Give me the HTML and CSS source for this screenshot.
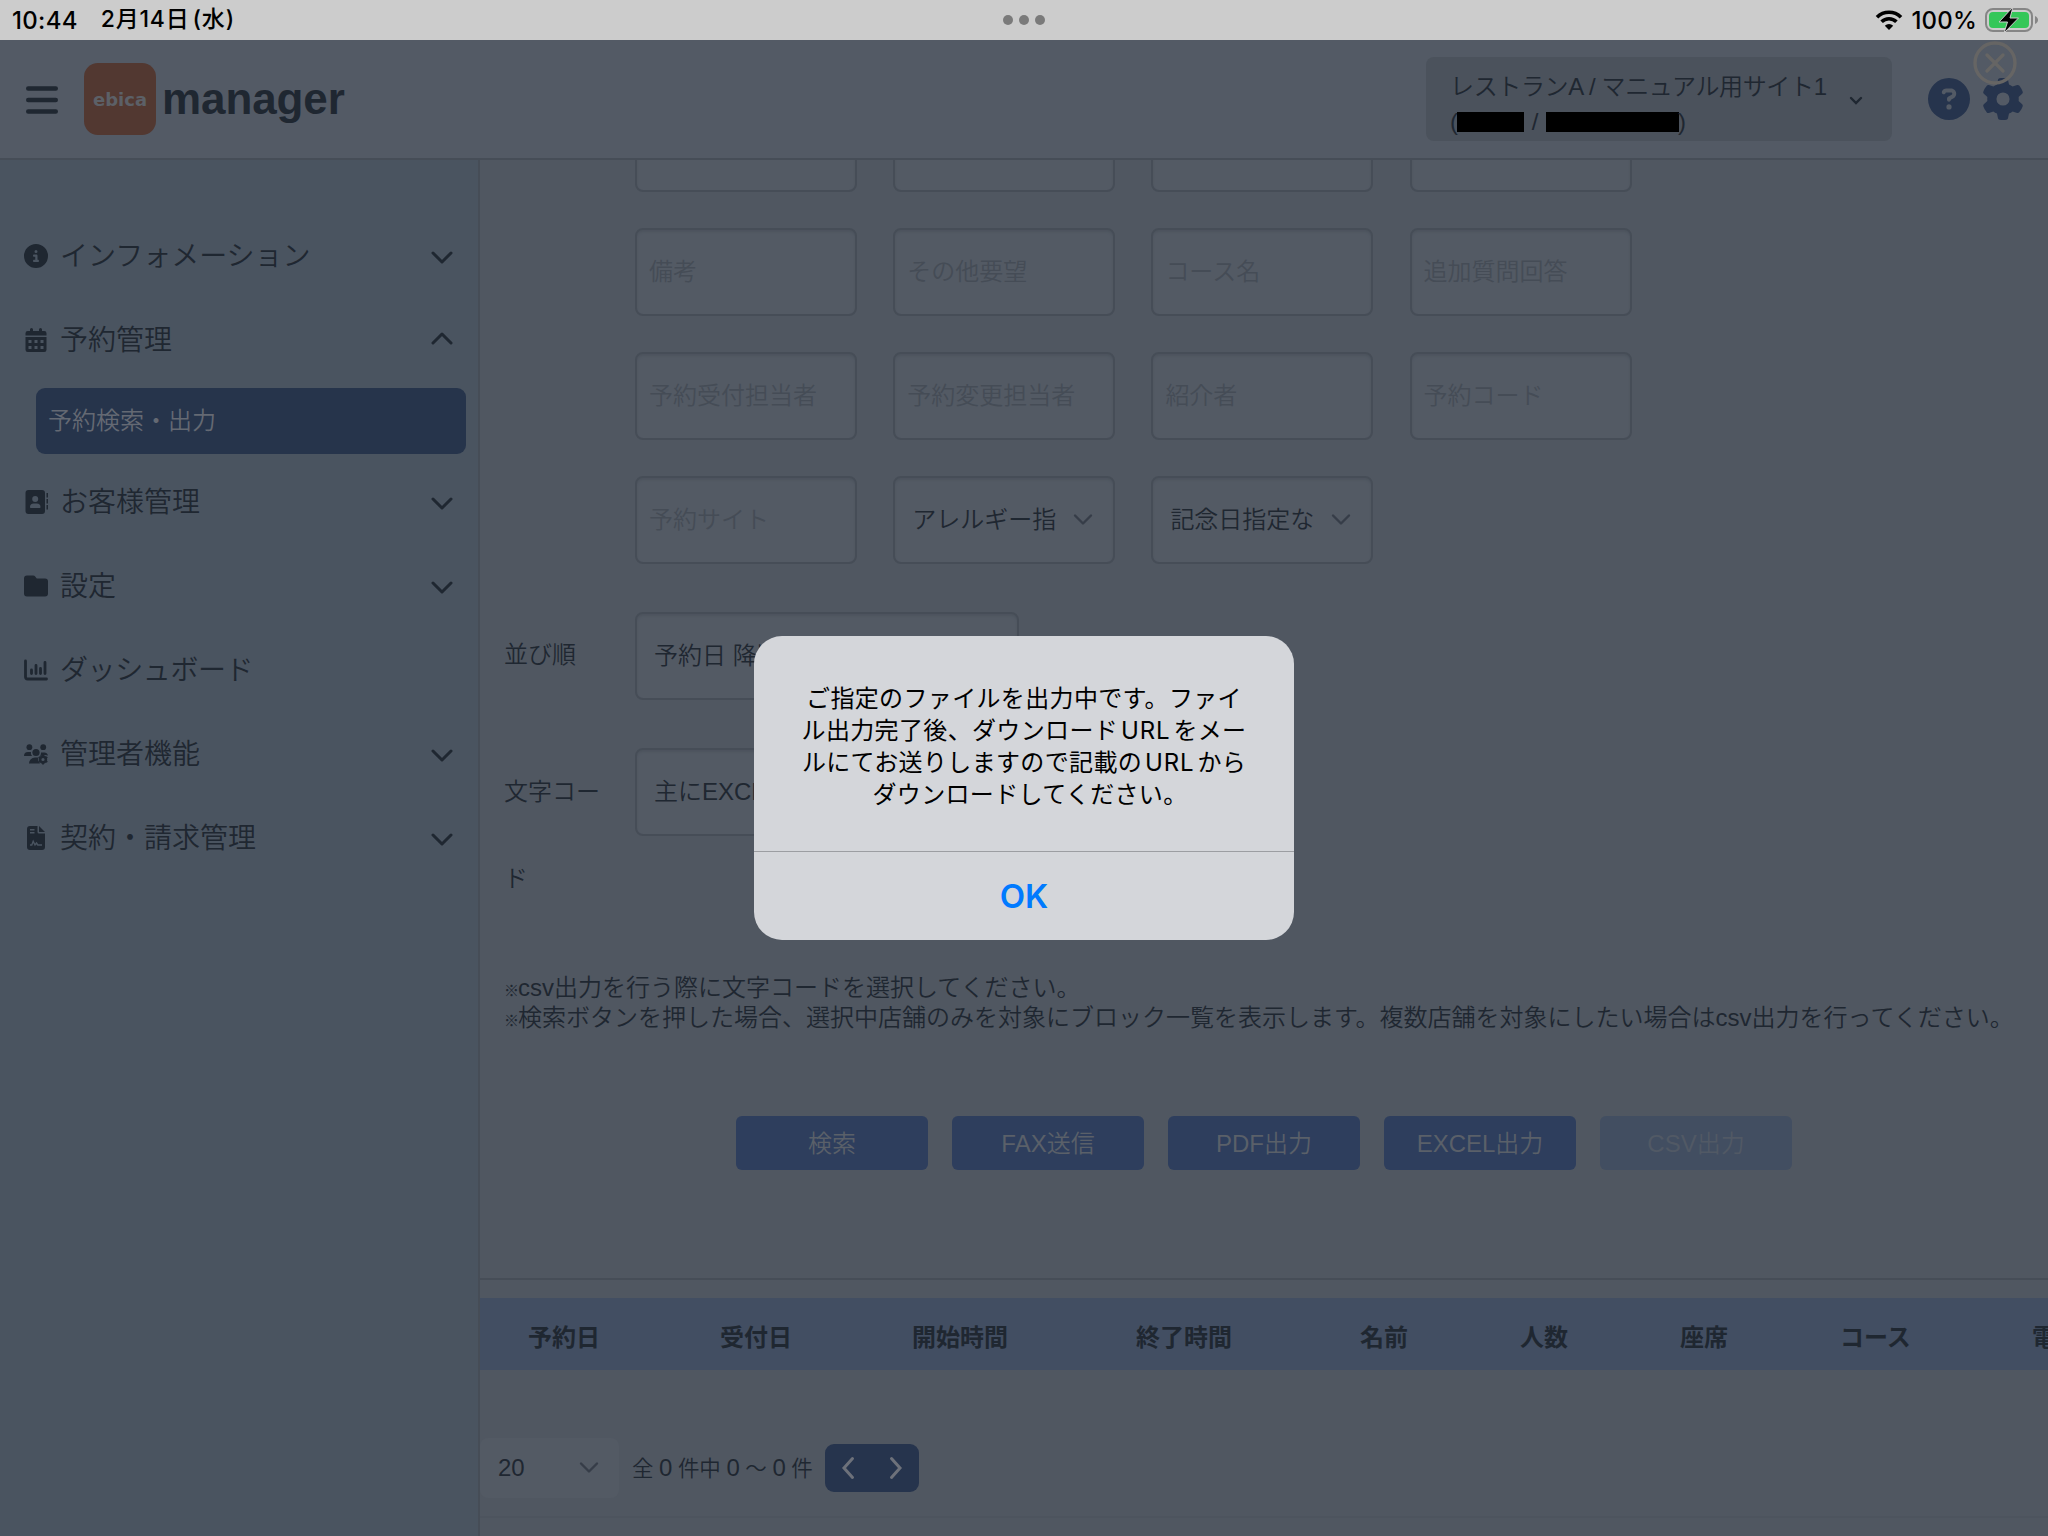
FILE: index.html
```
<!DOCTYPE html>
<html lang="ja">
  <head>
    <meta charset="UTF-8" />
    <title>ebica manager</title>
    <link rel="stylesheet" href="styles.css">
  </head>
  <body>
    <div class="statusbar">
      <div class="status-left"><span class="time">10:44</span><span class="date">2月14日<span class="paren">(</span>水<span>)</span></span></div>
      <div class="dots"><i></i><i></i><i></i></div>
      <div class="status-right">
        <svg class="wifi" viewBox="0 0 28 22">
          <path d="M2 8.2a17 17 0 0 1 24 0M6.6 12.8a10.5 10.5 0 0 1 14.8 0" fill="none" stroke="#000" stroke-width="3.6" />
          <path d="M14 21l-4.2-4.3a6 6 0 0 1 8.4 0z" />
        </svg>
        <span class="percent">100%</span>
        <svg class="battery" viewBox="0 0 54 26">
          <rect x="1" y="2" width="46" height="22" rx="7" fill="none" stroke="#858585" stroke-width="2" />
          <rect x="4" y="5" width="40" height="16" rx="4" fill="#35c759" />
          <path d="M50 9v8c2-.8 3-2.300 3-4s-1-3.200-3-4z" fill="#858585" />
          <path d="M28 0L14 15h8.500L19 26 33.500 11H25z" fill="#000" stroke="#ccc" stroke-width="1" />
        </svg>
      </div>
    </div>

    <header class="header">
      <svg class="burger" viewBox="0 0 32 28"><path d="M2.200 2.500h27.600M2.200 14h27.600M2.200 25.500h27.600" /></svg>
      <div class="logo">ebica</div>
      <h1>manager</h1>
      <div class="shop">
        <div class="shop-name">
          <div>レストランA / マニュアル用サイト1</div>
          <div class="shop-id">(<span class="mask mask-s"></span><span>/</span><span class="mask mask-l"></span>)</div>
        </div>
        <svg class="shop-arrow" viewBox="0 0 14 9"><path d="M2 2l5 5 5-5" /></svg>
      </div>
      <svg class="round" viewBox="0 0 512 512"><path d="M256 512A256 256 0 1 0 256 0a256 256 0 1 0 0 512zM169.800 165.300c7.900-22.300 29.100-37.300 52.800-37.300h58.300c34.900 0 63.100 28.300 63.100 63.100c0 22.600-12.100 43.500-31.700 54.800L280 264.400c-.2 13-10.900 23.600-24 23.600c-13.300 0-24-10.700-24-24V250.500c0-8.600 4.600-16.500 12.100-20.800l44.300-25.400c4.700-2.700 7.600-7.700 7.600-13.100c0-8.400-6.800-15.100-15.100-15.100H222.600c-3.400 0-6.400 2.100-7.500 5.300l-.4 1.200c-4.400 12.500-18.200 19-30.600 14.600s-19-18.200-14.600-30.600l.4-1.200zM224 352a32 32 0 1 1 64 0 32 32 0 1 1 -64 0z" /></svg>
      <svg class="round gear" viewBox="0 0 512 512"><path d="M495.900 166.600c3.200 8.700 .5 18.400-6.400 24.600l-43.300 39.400c1.100 8.300 1.700 16.800 1.700 25.400s-.6 17.100-1.700 25.400l43.300 39.400c6.900 6.200 9.600 15.900 6.400 24.600c-4.400 11.900-9.700 23.300-15.800 34.300l-4.700 8.100c-6.600 11-14 21.400-22.100 31.200c-5.900 7.200-15.700 9.600-24.500 6.800l-55.700-17.700c-13.400 10.300-28.200 18.900-44 25.400l-12.500 57.100c-2 9.100-9 16.300-18.200 17.800c-13.800 2.300-28 3.500-42.500 3.500s-28.700-1.200-42.500-3.500c-9.200-1.500-16.200-8.700-18.200-17.800l-12.500-57.100c-15.800-6.500-30.600-15.100-44-25.400L83.100 425.900c-8.800 2.800-18.600 .3-24.500-6.800c-8.100-9.800-15.500-20.200-22.100-31.200l-4.700-8.100c-6.100-11-11.400-22.400-15.800-34.300c-3.200-8.700-.5-18.400 6.400-24.600l43.300-39.400C64.600 273.100 64 264.600 64 256s.6-17.100 1.700-25.400L22.400 191.200c-6.900-6.200-9.600-15.900-6.400-24.600c4.400-11.900 9.700-23.300 15.800-34.300l4.700-8.100c6.600-11 14-21.400 22.100-31.200c5.900-7.200 15.700-9.600 24.500-6.800l55.700 17.700c13.400-10.300 28.200-18.900 44-25.400l12.500-57.100c2-9.100 9-16.300 18.200-17.800C227.300 1.200 241.500 0 256 0s28.700 1.200 42.500 3.500c9.200 1.500 16.200 8.700 18.200 17.800l12.500 57.100c15.800 6.500 30.600 15.100 44 25.400l55.700-17.700c8.800-2.800 18.600-.3 24.500 6.800c8.100 9.800 15.500 20.200 22.100 31.200l4.700 8.100c6.100 11 11.400 22.400 15.800 34.300zM256 336a80 80 0 1 0 0-160 80 80 0 1 0 0 160z" /></svg>
      <svg class="close" viewBox="0 0 44 44"><circle cx="22" cy="22" r="20" /><path d="M14 14l16 16M30 14L14 30" /></svg>
    </header>

    <div class="page">
      <nav class="sidebar">
        <div class="item">
          <svg class="icon" viewBox="0 0 512 512"><path d="M256 512A256 256 0 1 0 256 0a256 256 0 1 0 0 512zM216 336h24V272H216c-13.300 0-24-10.700-24-24s10.700-24 24-24h48c13.300 0 24 10.700 24 24v88h8c13.300 0 24 10.700 24 24s-10.700 24-24 24H216c-13.300 0-24-10.700-24-24s10.700-24 24-24zm40-208a32 32 0 1 1 0 64 32 32 0 1 1 0-64z" /></svg>
          <span>インフォメーション</span>
          <svg class="chev" viewBox="0 0 22 14"><path d="M2 2l9 9 9-9" /></svg>
        </div>
        <div class="item">
          <svg class="icon" viewBox="0 0 24 24"><path fill-rule="evenodd" d="M6 1.500a1.500 1.500 0 0 1 3 0V3h6V1.500a1.500 1.500 0 0 1 3 0V3h2.200a2.300 2.300 0 0 1 2.300 2.300V7.500h-21V5.300A2.300 2.300 0 0 1 3.800 3H6zM1.500 9h21v12.700a2.300 2.300 0 0 1-2.300 2.300H3.800a2.300 2.300 0 0 1-2.300-2.300zM4.500 12v3h3v-3zM10.500 12v3h3v-3zM16.500 12v3h3v-3zM4.500 18v3h3v-3zM10.500 18v3h3v-3zM16.500 18v3h3v-3z" /></svg>
          <span>予約管理</span>
          <svg class="chev up" viewBox="0 0 22 14"><path d="M2 12l9-9 9 9" /></svg>
        </div>
        <div class="sub">予約検索・出力</div>
        <div class="item">
          <svg class="icon" viewBox="0 0 24 24"><path fill-rule="evenodd" d="M4.500 0H18a3 3 0 0 1 3 3v18a3 3 0 0 1-3 3H4.500a3 3 0 0 1-3-3V3a3 3 0 0 1 3-3zM11.200 12a3 3 0 1 0 0-6 3 3 0 0 0 0 6zM9.700 13.500A3.700 3.700 0 0 0 6 17.300c0 .4.300.7.800.7h9c.4 0 .7-.3.7-.7a3.700 3.700 0 0 0-3.700-3.800zM22.500 3H24v4.500h-1.500zM22.500 9H24v4.500h-1.500zM22.500 15H24v4.500h-1.500z" /></svg>
          <span>お客様管理</span>
          <svg class="chev" viewBox="0 0 22 14"><path d="M2 2l9 9 9-9" /></svg>
        </div>
        <div class="item">
          <svg class="icon" viewBox="0 0 24 24"><path d="M3 22.500h18a3 3 0 0 0 3-3V7.500a3 3 0 0 0-3-3h-7.500a1.500 1.500 0 0 1-1.200-.6l-.9-1.200A3 3 0 0 0 9 1.500H3a3 3 0 0 0-3 3v15a3 3 0 0 0 3 3z" /></svg>
          <span>設定</span>
          <svg class="chev" viewBox="0 0 22 14"><path d="M2 2l9 9 9-9" /></svg>
        </div>
        <div class="item">
          <svg class="icon line" viewBox="0 0 24 24"><path d="M1.500 3v15.750a2.250 2.250 0 0 0 2.250 2.250H22.500M7.500 12v3.500M12 7.500v8M16.500 10.500v5M21 4.500v11" /></svg>
          <span class="dash">ダッシュボード</span>
        </div>
        <div class="item">
          <svg class="icon" viewBox="0 0 24 24">
            <circle cx="5.400" cy="5.200" r="2.900" /><circle cx="19.200" cy="5.200" r="2.900" /><circle cx="12" cy="10.500" r="3.600" />
            <path d="M0 14a4 4 0 0 1 4-4h3c-.3 1.600.2 3 1.200 4zM16 14c.8-1 1.100-2.400 1-3.500h3a4 4 0 0 1 4 3l-3-.5zM5 21.500a6 6 0 0 1 6-6h3.500c-1 2 0 4.500 1.500 6z" />
            <circle cx="19" cy="17.500" r="2.900" fill="none" stroke="#1f2731" stroke-width="2.600" />
            <path class="teeth" d="M19 12.500v10M14.700 15l8.600 5M23.300 15l-8.600 5" stroke-dasharray="1.800 6.400" />
          </svg>
          <span>管理者機能</span>
          <svg class="chev" viewBox="0 0 22 14"><path d="M2 2l9 9 9-9" /></svg>
        </div>
        <div class="item">
          <svg class="icon" viewBox="0 0 24 24"><path d="M3 3a3 3 0 0 1 3-3h7.500v6A1.500 1.500 0 0 0 15 7.500h6V21a3 3 0 0 1-3 3H6a3 3 0 0 1-3-3zM15 0l6 6h-6z" /><path class="cut" d="M6 3.700h4.500M6 6.700h4.500M6 19h1.800l1.400-3.800 1.800 3.800 1.500-2 1.300 2H18" /></svg>
          <span>契約・請求管理</span>
          <svg class="chev" viewBox="0 0 22 14"><path d="M2 2l9 9 9-9" /></svg>
        </div>
      </nav>

      <main class="main">
        <div class="fields">
          <input type="text" /><input type="text" /><input type="text" /><input type="text" />
          <input type="text" placeholder="備考" />
          <input type="text" placeholder="その他要望" />
          <input type="text" placeholder="コース名" />
          <input type="text" placeholder="追加質問回答" />
          <input type="text" placeholder="予約受付担当者" />
          <input type="text" placeholder="予約変更担当者" />
          <input type="text" placeholder="紹介者" />
          <input type="text" placeholder="予約コード" />
          <input type="text" placeholder="予約サイト" />
          <div class="select"><span>アレルギー指</span><svg viewBox="0 0 20 14"><path d="M2 2.500l8 8 8-8" /></svg></div>
          <div class="select"><span>記念日指定な</span><svg viewBox="0 0 20 14"><path d="M2 2.500l8 8 8-8" /></svg></div>
        </div>
        <div class="row"><label>並び順</label><div class="select wide"><span>予約日 降順</span></div></div>
        <div class="row row-code"><label>文字コード</label><div class="select wide"><span>主にEXCEL</span></div></div>
        <div class="notes">
          <p><span class="kome">※</span>csv出力を行う際に文字コードを選択してください。</p>
          <p><span class="kome">※</span>検索ボタンを押した場合、選択中店舗のみを対象にブロック一覧を表示します。複数店舗を対象にしたい場合はcsv出力を行ってください。</p>
        </div>
        <div class="buttons">
          <button>検索</button>
          <button>FAX送信</button>
          <button>PDF出力</button>
          <button>EXCEL出力</button>
          <button class="disabled">CSV出力</button>
        </div>
        <div class="result">
          <div class="thead">
            <div>予約日</div>
            <div>受付日</div>
            <div>開始時間</div>
            <div>終了時間</div>
            <div>名前</div>
            <div>人数</div>
            <div>座席</div>
            <div>コース</div>
            <div>電</div>
          </div>
          <div class="pager">
            <div class="count">20<svg viewBox="0 0 20 14"><path d="M2 2.500l8 8 8-8" /></svg></div>
            <div class="total">全 <b>0</b> 件中 <b>0</b> ～ <b>0</b> 件</div>
            <div class="arrows">
              <svg viewBox="0 0 14 24"><path d="M11.500 2.500L3 12l8.500 9.500" /></svg>
              <svg viewBox="0 0 14 24"><path d="M2.500 2.500L11 12l-8.500 9.500" /></svg>
            </div>
          </div>
        </div>
      </main>
    </div>

    <div class="modal">
      <p>ご指定のファイルを出力中です。ファイ<br />ル出力完了後、ダウンロード<span class="url">URL</span>をメー<br />ルにてお送りしますので記載の<span class="url">URL</span>から<br /><span class="last">ダウンロードしてください。</span></p>
      <div class="ok">OK</div>
    </div>
  </body>
</html>
```
FILE: styles.css
```
* {
  box-sizing: border-box;
}

body {
  margin: 0;
  width: 2048px;
  height: 1536px;
  overflow: hidden;
  position: relative;
  background: #505761;
  color: #1f2731;
  font-family: "Liberation Sans", "Noto Sans CJK JP", sans-serif;
  font-size: 24px;
  font-weight: 350;
}

svg {
  display: block;
  flex-shrink: 0;
}

p {
  margin: 0;
}

.statusbar {
  height: 40px;
  background: #ccc;
  color: #000;
  display: flex;
  align-items: center;
  justify-content: space-between;
  font-family: Inter, "Noto Sans CJK JP", sans-serif;
  font-weight: 500;
}

.status-left,
.status-right {
  width: 600px;
  display: flex;
  align-items: center;
}

.status-left {
  padding-left: 12px;
  gap: 23px;
}

.time {
  letter-spacing: 0.3px;
}

.date {
  font-size: 23px;
  line-height: 36px;
  margin-top: -2px;
  letter-spacing: 0.8px;
}

.paren {
  margin-left: 3px;
}

.dots {
  display: flex;
  gap: 6px;
}

.dots i {
  width: 10px;
  height: 10px;
  border-radius: 50%;
  background: #7a7a7a;
}

.status-right {
  justify-content: flex-end;
  padding-right: 9px;
}

.wifi {
  width: 28px;
  height: 22px;
}

.percent {
  margin: 0 8px 0 8px;
  letter-spacing: 0.2px;
}

.battery {
  width: 54px;
  height: 26px;
}

.header {
  height: 120px;
  position: relative;
  display: flex;
  align-items: center;
  padding: 0 24px 2px 26px;
  background: #535a65;
  border-bottom: 2px solid #464d57;
}

.burger {
  width: 32px;
  height: 28px;
  margin-top: 4px;
}

.burger path {
  stroke: #1f2731;
  stroke-width: 4.4;
  stroke-linecap: round;
}

.logo {
  width: 72px;
  height: 72px;
  margin: 2px 6px 0 26px;
  border-radius: 14px;
  background: #523831;
  color: #5c6067;
  font: bold 18px/74px "DejaVu Sans", sans-serif;
  text-align: center;
}

h1 {
  margin: 2px 0 0;
  font-size: 44px;
  line-height: 60px;
  letter-spacing: -0.1px;
}

.shop {
  width: 466px;
  height: 84px;
  margin: 2px 36px 0 auto;
  padding: 12px 29px 0 24px;
  border-radius: 8px;
  background: #4b525c;
  display: flex;
  justify-content: space-between;
  line-height: 35px;
}

.shop-name {
  white-space: nowrap;
  letter-spacing: -0.35px;
}

.shop-id {
  display: flex;
  align-items: center;
}

.mask {
  height: 20px;
  background: #000;
}

.mask-s {
  width: 67px;
  margin: 0 8px 0 -1px;
}

.mask-l {
  width: 133px;
  margin: 0 -1px 0 8px;
}

.shop-arrow {
  width: 14px;
  height: 9px;
  margin-top: 27px;
}

.shop-arrow path {
  fill: none;
  stroke: #1f2731;
  stroke-width: 2.4;
  stroke-linecap: round;
}

.round {
  width: 42px;
  height: 42px;
  margin-top: 2px;
  fill: #26344d;
}

.gear {
  margin-left: 12px;
}

.close {
  position: absolute;
  top: 1px;
  left: 1973px;
  width: 44px;
  height: 44px;
  fill: none;
  stroke: #666564;
  stroke-width: 3.4;
  stroke-linecap: round;
}

.page {
  display: flex;
  height: 1376px;
}

.sidebar {
  width: 480px;
  flex-shrink: 0;
  padding-top: 54px;
  background: #4a5460;
  border-right: 2px solid #464d57;
}

.item {
  height: 84px;
  padding: 0 25px 0 24px;
  display: flex;
  align-items: center;
  font-size: 28px;
}

.item span {
  margin-top: -4px;
}

.dash {
  letter-spacing: -0.4px;
}

.icon {
  width: 24px;
  height: 24px;
  margin-right: 12px;
  fill: #1f2731;
}

.line path {
  fill: none;
  stroke: #1f2731;
  stroke-width: 2.8;
  stroke-linecap: round;
}

.teeth {
  stroke: #1f2731;
  stroke-width: 1.8;
}

.cut {
  fill: none;
  stroke: #4a5460;
  stroke-width: 1.4;
}

.chev {
  width: 22px;
  height: 14px;
  margin: 3px 0 0 auto;
}

.chev path {
  fill: none;
  stroke: #1f2731;
  stroke-width: 3;
  stroke-linecap: round;
  stroke-linejoin: round;
}

.up {
  margin-top: -4px;
}

.sub {
  height: 66px;
  margin: 6px 12px 6px 36px;
  padding-left: 12px;
  border-radius: 9px;
  background: #26344b;
  color: #646973;
  line-height: 65px;
}

.main {
  flex: 1;
  min-width: 0;
  overflow: hidden;
}

.fields {
  display: grid;
  grid-template-columns: repeat(4, 222px);
  grid-auto-rows: 88px;
  gap: 36px 36.2px;
  margin: -56px 0 0 155px;
}

input,
.select {
  min-width: 0;
  padding: 0 12px;
  border: 2px solid #464d57;
  border-radius: 8px;
  background: #535a64;
  box-shadow: inset 0 2px 2px #4d545e;
  font: inherit;
}

input::placeholder {
  color: #454c56;
  opacity: 1;
}

.select {
  display: flex;
  align-items: center;
  padding: 0 20px 0 17px;
}

.select span {
  flex: 1;
  margin-top: -6px;
  white-space: nowrap;
}

.select svg {
  width: 20px;
  height: 14px;
  margin-left: 17px;
}

.select path,
.count path {
  fill: none;
  stroke: #363d48;
  stroke-width: 2.4;
  stroke-linecap: round;
  stroke-linejoin: round;
}

.row {
  display: flex;
  height: 88px;
  margin: 48px 0 0 24px;
}

.row-code {
  height: 176px;
}

label {
  width: 106px;
  margin-right: 25px;
  line-height: 86px;
  word-break: break-all;
}

.row-code label {
  line-height: 87px;
}

.wide {
  width: 384px;
  height: 88px;
}

.notes {
  margin: 48px 0 0 24px;
  white-space: nowrap;
}

.notes p {
  height: 30px;
  line-height: 31px;
}

.kome {
  margin-right: -1px;
  font-size: 15px;
  font-weight: 500;
  line-height: 1;
}

.buttons {
  display: flex;
  gap: 24px;
  margin: 84px 0 0 256px;
}

button {
  width: 192px;
  height: 54px;
  padding: 0 0 3px;
  border: none;
  border-radius: 6px;
  background: #2e3e5d;
  color: #5a6069;
  font: inherit;
}

.disabled {
  background: #424e61;
  color: #515965;
}

.result {
  margin-top: 108px;
  padding-top: 18px;
  border-top: 2px solid #464d57;
}

.thead {
  display: grid;
  grid-template-columns: 192px 192px 224px 224px 160px 160px 160px 192px 192px;
  height: 72px;
  padding: 3px 0 0 48px;
  line-height: 74px;
  background: #424e62;
  font-weight: bold;
}

.pager {
  display: flex;
  align-items: center;
  height: 148px;
  padding-top: 50px;
  border-bottom: 2px solid #4d545e;
}

.count {
  width: 139px;
  height: 60px;
  padding: 0 20px 0 18px;
  border-radius: 8px;
  background: #535a64;
  display: flex;
  align-items: center;
  justify-content: space-between;
}

.count svg {
  width: 20px;
  height: 14px;
}

.total {
  margin: -3px 12px 0 13px;
  font-size: 21.5px;
  letter-spacing: -0.2px;
  white-space: nowrap;
}

.total b {
  font-size: 24px;
  font-weight: normal;
}

.arrows {
  width: 94px;
  height: 48px;
  padding: 0 16px;
  border-radius: 9px;
  background: #26344d;
  display: flex;
  align-items: center;
  justify-content: space-between;
}

.arrows svg {
  width: 14px;
  height: 24px;
  fill: none;
  stroke: #6d717a;
  stroke-width: 3;
  stroke-linecap: round;
}

.modal {
  position: absolute;
  top: 636px;
  left: 754px;
  width: 540px;
  height: 304px;
  padding-top: 47px;
  border-radius: 28px;
  background: #d4d6da;
  color: #000;
  text-align: center;
}

.modal p {
  height: 168px;
  line-height: 32px;
  font-weight: 400;
  letter-spacing: 0.35px;
  white-space: nowrap;
}

.url {
  margin: 0 3px;
  font-family: Inter, sans-serif;
  letter-spacing: 0.8px;
}

.last {
  padding-left: 12px;
}

.ok {
  height: 89px;
  border-top: 1px solid #9c9ea2;
  color: #007aff;
  font: 600 33px/88px Inter, sans-serif;
}
```
